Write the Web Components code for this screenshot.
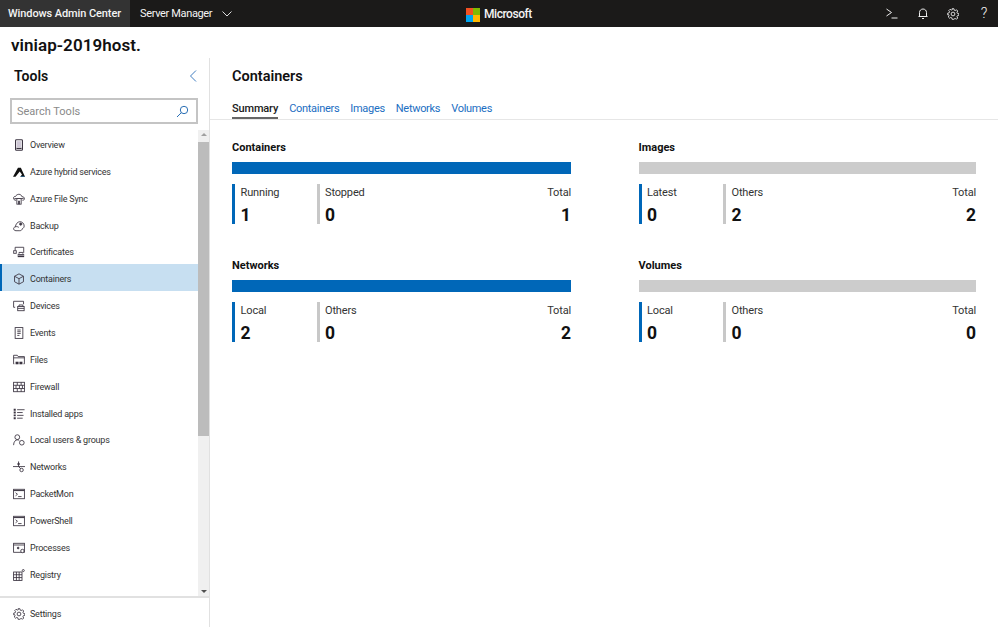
<!DOCTYPE html>
<html>
<head>
<meta charset="utf-8">
<title>Containers</title>
<style>
  html, body { margin: 0; height: 100%; }
  body { font-family: "Roboto", "Open Sans", sans-serif; color: #1a1a1a; background: #fff; overflow: hidden; }
  #app { display: flex; flex-direction: column; height: 627px; }
  #body { display: flex; flex: 1; min-height: 0; }
</style>
</head>
<body>
<div id="app">
  <wac-topbar></wac-topbar>
  <wac-title>viniap-2019host.</wac-title>
  <div id="body">
    <wac-sidebar>
      <wac-tool icon="overview">Overview</wac-tool>
      <wac-tool icon="azure">Azure hybrid services</wac-tool>
      <wac-tool icon="sync">Azure File Sync</wac-tool>
      <wac-tool icon="backup">Backup</wac-tool>
      <wac-tool icon="cert">Certificates</wac-tool>
      <wac-tool icon="box" selected>Containers</wac-tool>
      <wac-tool icon="devices">Devices</wac-tool>
      <wac-tool icon="events">Events</wac-tool>
      <wac-tool icon="files">Files</wac-tool>
      <wac-tool icon="firewall">Firewall</wac-tool>
      <wac-tool icon="apps">Installed apps</wac-tool>
      <wac-tool icon="users">Local users &amp; groups</wac-tool>
      <wac-tool icon="net">Networks</wac-tool>
      <wac-tool icon="shell">PacketMon</wac-tool>
      <wac-tool icon="shell">PowerShell</wac-tool>
      <wac-tool icon="proc">Processes</wac-tool>
      <wac-tool icon="reg">Registry</wac-tool>
      <wac-tool icon="box"></wac-tool>
    </wac-sidebar>
    <wac-main>
      <wac-card heading="Containers" color="#0067b8">
        <wac-stat label="Running" value="1" accent></wac-stat>
        <wac-stat label="Stopped" value="0"></wac-stat>
        <wac-stat label="Total" value="1" total></wac-stat>
      </wac-card>
      <wac-card heading="Images" color="#cccccc">
        <wac-stat label="Latest" value="0" accent></wac-stat>
        <wac-stat label="Others" value="2"></wac-stat>
        <wac-stat label="Total" value="2" total></wac-stat>
      </wac-card>
      <wac-card heading="Networks" color="#0067b8">
        <wac-stat label="Local" value="2" accent></wac-stat>
        <wac-stat label="Others" value="0"></wac-stat>
        <wac-stat label="Total" value="2" total></wac-stat>
      </wac-card>
      <wac-card heading="Volumes" color="#cccccc">
        <wac-stat label="Local" value="0" accent></wac-stat>
        <wac-stat label="Others" value="0"></wac-stat>
        <wac-stat label="Total" value="0" total></wac-stat>
      </wac-card>
    </wac-main>
  </div>
</div>

<script>
const ICONS = {
  overview: '<rect x="3" y=".8" width="8" height="12.400" rx="1" stroke-width="1.300"/><rect x="4.500" y="2.500" width="5" height="7" fill="#cfc8d6" stroke="none"/><path d="M4 11h6" stroke-width="1.500"/>',
  azure: '<path d="M5.800 2h3.400L14 12.500H8.500L10.500 10 7.800 6.500 3 12.500H0z" fill="#111" stroke="none"/><path d="M8.800 12.200H13.600" stroke="#1464a0" stroke-width=".7"/>',
  sync: '<path d="M3.500 8.500C1.500 8.500.5 7.200.5 6c0-1.300 1.200-2.200 2.500-2C3.600 2.500 5.200 1.500 6.800 1.500c1.900 0 3.300 1.200 3.600 2.800 1.800 0 3.100 1 3.100 2.300 0 1.100-1 1.900-2.500 1.900"/><path d="M1.500 6.500h11"/><rect x="4.500" y="6.500" width="5" height="6.500" fill="#fff"/><path d="M6 9h2v4H6z" fill="currentColor" stroke="none"/>',
  backup: '<path d="M3.500 12.500C1.800 12.500.7 11.300.7 10.200.7 9 1.700 8 2.800 8c.2-3 2.400-6 5.200-6 2.700 0 5 2 5 5 0 1.500-.8 2.600-2 3-.4 1.500-1.500 2.500-3 2.500z"/><path d="M2.800 8c1.500-.6 3-.3 4 .7"/><circle cx="9" cy="4.800" r="1.300" fill="currentColor"/>',
  cert: '<path d="M2.500 5V1.500h10V8"/><rect x=".8" y="5.500" width="3" height="3"/><rect x="5.500" y="9.500" width="7.500" height="3.500" fill="currentColor" stroke="none"/><path d="M7 9V7.500h4.500V9"/><path d="M5.500 11h7.500" stroke="#fff" stroke-width=".6"/>',
  box: '<path d="M7 1l5.200 2.800v6.400L7 13l-5.200-2.800V3.800z"/><path d="M1.800 3.800L7 6.600l5.200-2.800M7 6.600V13"/>',
  devices: '<path d="M2.500 8.500H.7v-7h11.600V5"/><rect x="5.500" y="7.500" width="7.500" height="5" fill="#fff"/><path d="M7 7.500V5.800h4.500v1.700M5.500 9.800h7.500"/>',
  events: '<rect x="2.500" y=".7" width="9" height="12.600"/><path d="M5 3.500h4M5 5.500h4M5 7.500h4M5 9.800h2.500"/>',
  files: '<path d="M1.500 11.500H.7V1.500h4.300l1 1.500h7.300v8.500h-1"/><path d="M.7 4.500h12.600"/><rect x="3" y="9" width="3.500" height="3" fill="currentColor" stroke="none"/><rect x="7.500" y="9" width="3.500" height="3" fill="currentColor" stroke="none"/>',
  firewall: '<rect x=".7" y="1.500" width="12.600" height="11"/><path d="M.7 5h12.600M.7 8.800h12.600M5 1.500V5M9.500 1.500V5M3.500 5v3.800M7.500 5v3.800M11 5v3.800M5 8.800v3.700M9.500 8.800v3.700"/>',
  apps: '<path d="M.8 2h2.400M.8 5.300h2.400M.8 8.600h2.400M.8 11.900h2.400" stroke-width="2.200"/><path d="M4.800 2h8.700M4.800 5.300h6.500M4.800 8.600h7.500M4.800 11.900h6.500"/>',
  users: '<circle cx="5" cy="3.700" r="2.800"/><path d="M.7 13C.7 9 3 6.800 5 6.800c1 0 1.700.3 2.300.8"/><circle cx="10.300" cy="10.200" r="2.700"/>',
  net: '<path d="M0 6.500h14M6.500 .5v6l3 3"/><circle cx="6.500" cy="3.500" r="1" fill="currentColor"/><circle cx="10" cy="10.500" r="2" fill="#fff"/>',
  shell: '<rect x=".7" y="1.500" width="12.600" height="11"/><path d="M.7 3h12.600" stroke-width="1.200"/><path d="M3 5.500l2.200 1.800L3 9.100M6 10h4"/>',
  proc: '<rect x=".7" y="1.500" width="12.600" height="10.500"/><path d="M.7 3.500h12.600"/><circle cx="6" cy="7" r="1" fill="currentColor"/><circle cx="11" cy="10.500" r="2" fill="#fff"/>',
  reg: '<rect x=".7" y="3.500" width="9.800" height="9.800"/><path d="M.7 6.700h9.800M.7 10h9.800M4 3.500v9.800M7.200 3.500v9.800"/><circle cx="12" cy="1.800" r="1.200"/>',
  gear: '<circle cx="7" cy="7" r="2.200"/><path d="M6 .8h2l.4 1.700 1.200.5 1.500-.9 1.400 1.400-.9 1.500.5 1.200 1.700.4v2l-1.700.4-.5 1.200.9 1.500-1.400 1.400-1.500-.9-1.200.5L8 13.200H6l-.4-1.700-1.200-.5-1.500.9-1.400-1.400.9-1.500-.5-1.200L.8 8V6l1.700-.4.5-1.200-.9-1.500 1.400-1.400 1.500.9 1.200-.5z"/>'
}

function iconSvg(name, size) {
  return `<svg width="${size}" height="${size}" viewBox="0 0 14 14" fill="none" stroke="currentColor" stroke-width="1">${ICONS[name] || ''}</svg>`
}

class WacTopbar extends HTMLElement {
  constructor() {
    super()
    this.attachShadow({mode: 'open'}).innerHTML = `<style>
        :host { display: flex; align-items: stretch; height: 27px; background: #1b1a19; color: #f4f4f4; font-size: 11px; font-weight: 500; position: relative; flex: none; }
        .brand { background: #333; width: 130px; display: flex; align-items: center; padding-left: 8px; box-sizing: border-box; white-space: nowrap; letter-spacing: -.1px; }
        .menu { display: flex; align-items: center; gap: 10px; padding-left: 10px; white-space: nowrap; font-weight: 400; letter-spacing: -.35px; }
        .ms { position: absolute; left: 466px; top: 7px; display: flex; align-items: center; gap: 4px; font-size: 12px; font-weight: 500; line-height: 15px; letter-spacing: -.45px; }
        .logo { display: grid; grid-template-columns: 7px 7px; grid-template-rows: 7px 7px; gap: 0; }
        .logo i:nth-child(1) { background: #f25022; }
        .logo i:nth-child(2) { background: #7fba00; }
        .logo i:nth-child(3) { background: #00a4ef; }
        .logo i:nth-child(4) { background: #ffb900; }
        .actions { margin-left: auto; display: flex; align-items: center; gap: 10.700px; padding-right: 4px; }
        .actions span { width: 20px; display: flex; justify-content: center; align-items: center; font-size: 14.500px; font-weight: 300; }
      </style>
      <div class="brand">Windows Admin Center</div>
      <div class="menu">Server Manager
        <svg width="10" height="6" viewBox="0 0 10 6" fill="none" stroke="#ddd"><path d="M.5.500L5 5 9.500.500"/></svg>
      </div>
      <div class="ms"><div class="logo"><i></i><i></i><i></i><i></i></div><span>Microsoft</span></div>
      <div class="actions">
        <span><svg width="12" height="11" viewBox="0 0 12 11" fill="none" stroke="#eee"><path d="M.5 1L5.500 4.500.5 8M5.500 10h6"/></svg></span>
        <span><svg width="10" height="12" viewBox="0 0 10 12" fill="none" stroke="#eee"><path d="M1.500 8.500V4.500C1.500 2.500 3 1 5 1s3.500 1.500 3.500 3.500v4zM.5 8.500h9M4 10.500h2"/></svg></span>
        <span>${iconSvg('gear', 12)}</span>
        <span>?</span>
      </div>`
  }
}

class WacTitle extends HTMLElement {
  constructor() {
    super()
    this.attachShadow({mode: 'open'}).innerHTML = `<style>
        :host { display: block; height: 31px; flex: none; padding-left: 11px; font-size: 17px; font-weight: 600; line-height: 36px; letter-spacing: .05px; color: #111; }
      </style><slot></slot>`
  }
}

class WacSidebar extends HTMLElement {
  constructor() {
    super()
    this.attachShadow({mode: 'open'}).innerHTML = `<style>
        :host { display: flex; flex-direction: column; width: 210px; flex: none; box-sizing: border-box; border-right: 1px solid #e1e1e1; }
        header { display: flex; justify-content: space-between; align-items: center; height: 36px; padding: 0 12px 4px 14px; flex: none; font-size: 14px; font-weight: 600; color: #111; }
        .search { margin: 0 11px 0 10px; height: 26px; box-sizing: border-box; border: 2px solid #c4c4c4; display: flex; align-items: center; justify-content: space-between; padding: 0 7px 0 5px; font-size: 11px; color: #8a8a8a; flex: none; }
        .wrap { flex: 1; display: flex; min-height: 0; margin-top: 6px; }
        .list { flex: 1; overflow: hidden; }
        .bar { width: 11px; background: #f0f0f0; flex: none; display: flex; flex-direction: column; align-items: center; justify-content: space-between; position: relative; }
        .thumb { position: absolute; left: 0; right: 0; top: 12px; height: 294px; background: #bcbcbc; }
        .arrow { width: 0; height: 0; border-left: 3px solid transparent; border-right: 3px solid transparent; margin: 3px 0; }
        .up { border-bottom: 3px solid #a0a0a0; }
        .down { border-top: 3px solid #505050; }
        footer { height: 31px; flex: none; border-top: 2px solid #e1e1e1; box-sizing: border-box; padding-top: 1px; }
      </style>
      <header><span>Tools</span>
        <svg width="8" height="12" viewBox="0 0 8 12" fill="none" stroke="#3f7cc0"><path d="M7 .5L1.500 6 7 11.500"/></svg>
      </header>
      <div class="search"><span>Search Tools</span>
        <svg width="13" height="13" viewBox="0 0 13 13" fill="none" stroke="#2a6fb5"><circle cx="8" cy="5" r="3.700"/><path d="M5.300 7.700L1 12"/></svg>
      </div>
      <div class="wrap">
        <div class="list"><slot></slot></div>
        <div class="bar"><i class="arrow up"></i><div class="thumb"></div><i class="arrow down"></i></div>
      </div>
      <footer><wac-tool icon="gear">Settings</wac-tool></footer>`
  }
}

class WacTool extends HTMLElement {
  constructor() {
    super()
    const name = this.getAttribute('icon')
    this.attachShadow({mode: 'open'}).innerHTML = `<style>
        :host { display: flex; align-items: center; height: 26.860px; box-sizing: border-box; padding: 3px 0 0 13px; gap: 5px; font-size: 9px; letter-spacing: -.22px; color: #333; white-space: nowrap; }
        :host([selected]) { background: #c7dff1; box-shadow: inset 2px 0 0 #0067b8; }
        svg { color: #3a3340; flex: none; }
      </style>${iconSvg(name, 12)}<slot></slot>`
  }
}

class WacMain extends HTMLElement {
  constructor() {
    super()
    const tabs = ['Containers', 'Images', 'Networks', 'Volumes'].map(t => `<a>${t}</a>`).join('')
    this.attachShadow({mode: 'open'}).innerHTML = `<style>
        :host { display: flex; flex-direction: column; flex: 1; min-width: 0; }
        h1 { margin: 0; padding: 10px 0 0 22px; height: 26px; font-size: 14.500px; font-weight: 600; line-height: 18px; color: #111; }
        nav { display: flex; gap: 11px; padding: 0 0 0 22px; height: 25px; border-bottom: 1px solid #e6e6e6; font-size: 11px; line-height: 20px; letter-spacing: -.3px; }
        nav a { color: #1b6ec2; height: 25px; box-sizing: border-box; padding-top: 5px; }
        nav a.on { color: #1a1a1a; font-weight: 500; letter-spacing: -.15px; border-bottom: 2px solid #666; }
        .grid { display: grid; grid-template-columns: 339px 337.500px; column-gap: 67.500px; row-gap: 0; padding: 20px 0 0 22px; }
      </style>
      <h1>Containers</h1>
      <nav><a class="on">Summary</a>${tabs}</nav>
      <div class="grid"><slot></slot></div>`
  }
}

class WacCard extends HTMLElement {
  constructor() {
    super()
    this.attachShadow({mode: 'open'}).innerHTML = `<style>
        :host { display: block; height: 118px; }
        h2 { margin: 0; padding-top: 1px; font-size: 11px; font-weight: 700; line-height: 14px; color: #111; }
        .bar { height: 12px; margin-top: 7px; background: ${this.getAttribute('color')}; }
        .stats { display: flex; margin-top: 10px; }
      </style>
      <h2>${this.getAttribute('heading')}</h2>
      <div class="bar"></div>
      <div class="stats"><slot></slot></div>`
  }
}

class WacStat extends HTMLElement {
  constructor() {
    super()
    this.attachShadow({mode: 'open'}).innerHTML = `<style>
        :host { display: flex; flex-direction: column; width: 84.500px; box-sizing: border-box; height: 40px; padding: 1px 0 0 5.500px; border-left: 3px solid #c8c8c8; font-size: 11px; letter-spacing: -.15px; color: #333; }
        :host([accent]) { border-left-color: #0067b8; }
        :host([total]) { margin-left: auto; border: 0; text-align: right; padding: 1px 0 0; }
        .l { line-height: 15px; }
        .v { font-size: 17.500px; font-weight: 700; line-height: 26px; padding-top: 2px; color: #111; }
      </style>
      <div class="l">${this.getAttribute('label')}</div>
      <div class="v">${this.getAttribute('value')}</div>`
  }
}

customElements.define('wac-tool', WacTool)
customElements.define('wac-topbar', WacTopbar)
customElements.define('wac-title', WacTitle)
customElements.define('wac-sidebar', WacSidebar)
customElements.define('wac-main', WacMain)
customElements.define('wac-card', WacCard)
customElements.define('wac-stat', WacStat)
</script>
</body>
</html>
